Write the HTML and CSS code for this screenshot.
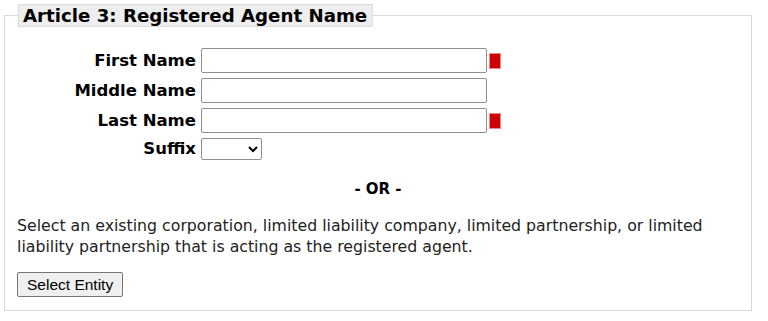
FILE: index.html
```html
<!DOCTYPE html>
<html>
<head>
<meta charset="utf-8">
<link rel="stylesheet" href="styles.css">
</head>
<body>
<fieldset class="box">
  <legend class="box-title">Article 3: Registered Agent Name</legend>
  <div class="name-form">
    <label class="lbl" for="fn">First Name</label>
    <div class="field"><input id="fn" class="txt" type="text"><span class="req"></span></div>
    <label class="lbl" for="mn">Middle Name</label>
    <div class="field"><input id="mn" class="txt" type="text"></div>
    <label class="lbl" for="ln">Last Name</label>
    <div class="field"><input id="ln" class="txt" type="text"><span class="req"></span></div>
    <label class="lbl" for="sf">Suffix</label>
    <div class="field"><select id="sf" class="sel"><option></option><option>Jr.</option><option>Sr.</option><option>II</option><option>III</option></select></div>
  </div>
  <div class="or">- OR -</div>
  <p class="desc">Select an existing corporation, limited liability company, limited partnership, or limited liability partnership that is acting as the registered agent.</p>
  <button class="btn" type="button">Select Entity</button>
</fieldset>
</body>
</html>
```
FILE: styles.css
```css
html, body {
  margin: 0;
  padding: 0;
  background: #fff;
}
body {
  padding: 4px 16px 0 4px;
  font-family: "DejaVu Sans", Verdana, sans-serif;
  color: #000;
}
.box {
  margin: 0;
  width: 748px;
  box-sizing: border-box;
  border: 1px solid #d9d9d9;
  padding: 6px 12px 13px 12px;
}
.box-title {
  margin-left: 1px;
  padding: 1px 5px 1px 4px;
  background: #eeeeee;
  border: 1px solid #dcdcdc;
  font-weight: bold;
  font-size: 18.2px;
  line-height: 19px;
}
.name-form {
  display: grid;
  grid-template-columns: 179px auto;
  column-gap: 5px;
  row-gap: 5px;
  align-items: center;
  margin-top: 15px;
}
.lbl {
  text-align: right;
  font-weight: bold;
  font-size: 16.5px;
  line-height: 20px;
}
.field {
  display: flex;
  align-items: center;
  gap: 3px;
}
.txt {
  width: 286px;
  height: 25px;
  box-sizing: border-box;
  margin: 0;
  border: 1px solid #8f8f8f;
  border-radius: 2px;
  padding: 1px 3px;
  background: #fff;
}
.req {
  width: 10px;
  height: 14px;
  background: #cc0000;
  box-shadow: 0 0 0 1px #e88;
}
.sel {
  width: 61px;
  height: 22px;
  margin: 0;
  box-sizing: border-box;
  border: 1px solid #8f8f8f;
  border-radius: 2px;
  background: #fff;
}
.or {
  margin-top: 19px;
  text-align: center;
  font-weight: bold;
  font-size: 15px;
  line-height: 20px;
}
.desc {
  margin: 16px 0 15px 0;
  font-family: "DejaVu Sans", Verdana, sans-serif;
  font-size: 15.75px;
  line-height: 21px;
  color: #222;
}
.btn {
  margin: 0;
  height: 25px;
  padding: 1px 9px;
  font-family: "Liberation Sans", Arial, sans-serif;
  font-size: 15.5px;
  color: #000;
  background: #efefef;
  border: 1px solid #767676;
  border-radius: 2px;
}
```
